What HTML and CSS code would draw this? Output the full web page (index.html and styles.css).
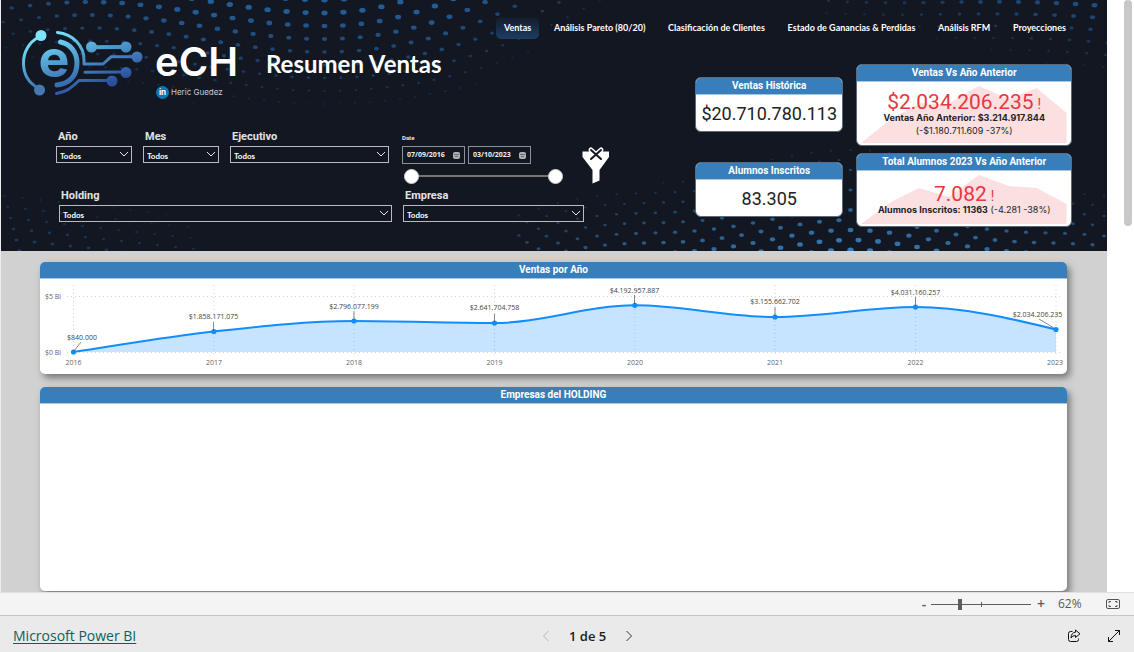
FILE: index.html
```html
<!DOCTYPE html>
<html lang="es">
<head>
<meta charset="utf-8">
<meta name="viewport" content="width=device-width, initial-scale=1">
<title>Resumen Ventas</title>
<link rel="stylesheet" href="styles.css">
</head>
<body>
<main class="viewer">
  <div class="report">
    <header class="hero">
      <svg class="hero-dots" viewBox="0 0 1107 251" preserveAspectRatio="xMidYMid slice" aria-hidden="true"></svg>

      <div class="brand">
        <svg class="brand-mark" viewBox="20 28 124 70" aria-hidden="true">
          <defs>
            <linearGradient id="mark" gradientUnits="userSpaceOnUse" x1="60" y1="32" x2="80" y2="94">
              <stop offset="0" stop-color="#76e2fb"/>
              <stop offset="0.5" stop-color="#4b93c8"/>
              <stop offset="1" stop-color="#2b4c9c"/>
            </linearGradient>
          </defs>
          <g fill="none" stroke="url(#mark)" stroke-width="3" stroke-linecap="round">
            <path d="M39 37C29 42 23.500 52 23.500 63S29 83 38 88"/>
            <path d="M57.500 32.500C73 34 84 46 84 60V64H103L111 56.800H134" stroke-linejoin="round"/>
            <path d="M60.500 42C71 44 77 53 77 63C77 76 69 84 57 85" stroke-width="5"/>
            <path d="M56.500 93.500C66 92 70 89 79 80.500H110" stroke-linejoin="round"/>
            <path d="M92 47.200L125 47" stroke-width="4"/>
            <path d="M85 72.200L124 72"/>
          </g>
          <g fill="url(#mark)">
            <circle cx="41" cy="35.500" r="5.500" fill="#7ce4fc"/>
            <circle cx="39.500" cy="90" r="5.500" fill="#4678b4"/>
            <circle cx="91.500" cy="47" r="5.500"/>
            <circle cx="126" cy="47" r="5.500"/>
            <circle cx="137" cy="57" r="5.500"/>
            <circle cx="126" cy="72.500" r="5.500"/>
            <circle cx="112" cy="81" r="5.500"/>
          </g>
          <text class="mark-letter" x="54" y="77" text-anchor="middle" fill="url(#mark)">e</text>
        </svg>
        <div class="brand-name">
          <span class="brand-title">eCH</span>
          <span class="brand-author"><span class="linkedin">in</span>Heric Guedez</span>
        </div>
        <h1>Resumen Ventas</h1>
      </div>

      <nav class="tabs">
        <a class="tab tab-active" href="#">Ventas</a>
        <a class="tab" href="#">Análisis Pareto (80/20)</a>
        <a class="tab" href="#">Clasificación de Clientes</a>
        <a class="tab" href="#">Estado de Ganancias &amp; Perdidas</a>
        <a class="tab" href="#">Análisis RFM</a>
        <a class="tab" href="#">Proyecciones</a>
      </nav>

      <form class="filters">
        <div class="filter-row">
          <div class="field field-small">
            <label for="anio">Año</label>
            <div class="picker"><select id="anio"><option>Todos</option></select><svg class="chevron" viewBox="0 0 10 6"><path d="M1 1L5 5L9 1"/></svg></div>
          </div>
          <div class="field field-small">
            <label for="mes">Mes</label>
            <div class="picker"><select id="mes"><option>Todos</option></select><svg class="chevron" viewBox="0 0 10 6"><path d="M1 1L5 5L9 1"/></svg></div>
          </div>
          <div class="field field-medium">
            <label for="ejecutivo">Ejecutivo</label>
            <div class="picker"><select id="ejecutivo"><option>Todos</option></select><svg class="chevron" viewBox="0 0 10 6"><path d="M1 1L5 5L9 1"/></svg></div>
          </div>
          <div class="field field-date">
            <label class="date-label" for="desde">Date</label>
            <div class="dates">
              <div class="date"><input id="desde" type="text" value="07/09/2016"><svg viewBox="0 0 7 7"><rect x="0.500" y="0.500" width="6" height="6" rx="1"/><path d="M1 2.500H6M2 4.500H5"/></svg></div>
              <div class="date"><input type="text" value="03/10/2023" aria-label="Fecha final"><svg viewBox="0 0 7 7"><rect x="0.500" y="0.500" width="6" height="6" rx="1"/><path d="M1 2.500H6M2 4.500H5"/></svg></div>
            </div>
            <div class="span-slider">
              <input type="range" value="0" aria-label="Inicio del rango">
              <input type="range" value="100" aria-label="Fin del rango">
            </div>
          </div>
          <button class="clear" type="button" aria-label="Borrar filtros">
            <svg viewBox="582 146 28 38">
              <path class="funnel" d="M582.500 151.500H609V157L599.500 170V180.500L592.500 183.500V170L582.500 157Z"/>
              <path class="cross-edge" d="M591 150L601 159M601 150L591 159"/>
              <path class="cross" d="M591 150L601 159M601 150L591 159"/>
            </svg>
          </button>
        </div>
        <div class="filter-row filter-row-wide">
          <div class="field field-holding">
            <label for="holding">Holding</label>
            <div class="picker"><select id="holding"><option>Todos</option></select><svg class="chevron" viewBox="0 0 10 6"><path d="M1 1L5 5L9 1"/></svg></div>
          </div>
          <div class="field field-empresa">
            <label for="empresa">Empresa</label>
            <div class="picker"><select id="empresa"><option>Todos</option></select><svg class="chevron" viewBox="0 0 10 6"><path d="M1 1L5 5L9 1"/></svg></div>
          </div>
        </div>
      </form>

      <section class="kpis">
        <div class="kpi-totals">
          <article class="card">
            <h2>Ventas Histórica</h2>
            <p class="total">$20.710.780.113</p>
          </article>
          <article class="card">
            <h2>Alumnos Inscritos</h2>
            <p class="total">83.305</p>
          </article>
        </div>
        <div class="kpi-trends">
          <article class="card">
            <h2>Ventas Vs Año Anterior</h2>
            <div class="trend trend-sales">
              <svg class="spark" viewBox="0 0 206 58" preserveAspectRatio="none" aria-hidden="true"><path d="M0 58L30 34L60 18L85 20L118 1L148 14L176 3L206 28V58Z"/></svg>
              <p class="value">$2.034.206.235<span class="alert">!</span></p>
              <p class="goal"><b>Ventas Año Anterior: $3.214.917.844</b></p>
              <p class="goal">(-$1.180.711.609 -37%)</p>
            </div>
          </article>
          <article class="card">
            <h2>Total Alumnos 2023 Vs Año Anterior</h2>
            <div class="trend trend-students">
              <svg class="spark" viewBox="0 0 206 50" preserveAspectRatio="none" aria-hidden="true"><path d="M0 50L30 28L58 14L88 23L118 1L148 12L176 14L206 30V50Z"/></svg>
              <p class="value">7.082<span class="alert">!</span></p>
              <p class="goal"><b>Alumnos Inscritos: 11363</b> (-4.281 -38%)</p>
            </div>
          </article>
        </div>
      </section>
    </header>

    <div class="panels">
      <section class="panel">
        <h2>Ventas por Año</h2>
        <svg class="chart" viewBox="0 0 1027 95" role="img" aria-label="Ventas por Año">
          <path class="grid" d="M27 17.500H1021M27 73.500H1021M33.500 6V77M173.800 6V77M314 6V77M454.500 6V77M594.800 6V77M735 6V77M875.500 6V77M1016 6V77"/>
          <path class="area" d="M33.500 73C80 66 127 57.700 173.800 52.500C220.600 47.300 267 42 314 42C361 42 408 44 454.500 44C501 44 548 26.300 594.800 26.300C641.500 26.300 688 38 735 38C782 38 829 28 875.500 28C922 28 969 39 1016 50.500V73H33.500Z"/>
          <path class="line" d="M33.500 73C80 66 127 57.700 173.800 52.500C220.600 47.300 267 42 314 42C361 42 408 44 454.500 44C501 44 548 26.300 594.800 26.300C641.500 26.300 688 38 735 38C782 38 829 28 875.500 28C922 28 969 39 1016 50.500"/>
          <g class="points">
            <circle cx="33.500" cy="73" r="2.600"/><circle cx="173.800" cy="52.500" r="2.600"/><circle cx="314" cy="42" r="2.600"/><circle cx="454.500" cy="44" r="2.600"/><circle cx="594.800" cy="26.300" r="2.600"/><circle cx="735" cy="38" r="2.600"/><circle cx="875.500" cy="28" r="2.600"/><circle cx="1016" cy="50.500" r="2.600"/>
          </g>
          <path class="leaders" d="M34 72L41 63M173.500 52V43M314 41V32M454.500 43V35M594.500 25V16M735 37V28M875.500 27V18M1014 49L999 40"/>
          <g class="labels">
            <text x="42" y="61">$840.000</text><text x="173.500" y="40">$1.858.171.075</text><text x="314" y="30">$2.796.077.199</text><text x="454.500" y="31">$2.641.704.758</text><text x="594.500" y="14">$4.192.957.887</text><text x="735" y="25">$3.155.662.702</text><text x="875.500" y="16">$4.031.160.257</text><text x="997.500" y="38">$2.034.206.235</text>
          </g>
          <g class="ticks">
            <text x="13" y="20">$5 Bi</text><text x="13" y="76">$0 Bi</text>
            <text x="33.500" y="86">2016</text><text x="174" y="86">2017</text><text x="314" y="86">2018</text><text x="454.500" y="86">2019</text><text x="595" y="86">2020</text><text x="735" y="86">2021</text><text x="875.500" y="86">2022</text><text x="1015" y="86">2023</text>
          </g>
        </svg>
      </section>
      <section class="panel panel-fill">
        <h2>Empresas del HOLDING</h2>
      </section>
    </div>
  </div>
  <div class="scroll-track"><div class="scroll-thumb"></div></div>
</main>

<div class="zoom-bar">
  <button class="zoom-step" type="button" aria-label="Alejar">-</button>
  <input class="zoom-range" type="range" min="0" max="100" value="28" aria-label="Zoom">
  <button class="zoom-step" type="button" aria-label="Acercar">+</button>
  <span class="zoom-value">62%</span>
  <button class="fit" type="button" aria-label="Ajustar a la página">
    <svg viewBox="0 0 14 10"><rect x="0.500" y="0.500" width="13" height="9" rx="1.500"/><path d="M3 4V2.500H5M9 2.500H11V4M11 6V7.500H9M5 7.500H3V6"/></svg>
  </button>
</div>

<footer class="footer">
  <a class="product" href="#">Microsoft Power BI</a>
  <div class="pager">
    <button class="page-prev" type="button" aria-label="Página anterior" disabled><svg viewBox="0 0 8 12"><path d="M6.500 1L1.500 6L6.500 11"/></svg></button>
    <span>1 de 5</span>
    <button type="button" aria-label="Página siguiente"><svg viewBox="0 0 8 12"><path d="M1.500 1L6.500 6L1.500 11"/></svg></button>
  </div>
  <div class="actions">
    <button type="button" aria-label="Compartir"><svg viewBox="0 0 14 14"><path d="M5.500 2.500H3.500Q1.500 2.500 1.500 4.500V10.500Q1.500 12.500 3.500 12.500H9.500Q11.500 12.500 11.500 10.500V9.500"/><path d="M8.500 1L13 4.800L8.500 8.500V6.500Q5.500 6.300 4 9Q4.300 3.500 8.500 3.200Z" stroke-linejoin="round"/></svg></button>
    <button type="button" aria-label="Pantalla completa"><svg viewBox="0 0 14 14"><path d="M8 1.500H12.500V6M12.500 1.500L1.500 12.500M1.500 8V12.500H6"/></svg></button>
  </div>
</footer>
<script src="dots.js"></script>
</body>
</html>
```

FILE: styles.css
```css
* { box-sizing: border-box; }

body {
  margin: 0;
  height: 100vh;
  display: flex;
  flex-direction: column;
  overflow: hidden;
  font-family: "Open Sans", "Noto Sans", sans-serif;
  background: #fff;
}

h1, h2, p { margin: 0; }
button { padding: 0; border: 0; background: none; font: inherit; color: inherit; }
svg { display: block; }

.viewer { flex: 1; min-height: 0; display: flex; }

.report {
  flex: 1;
  min-width: 0;
  display: flex;
  flex-direction: column;
  border-left: 1px solid #ededed;
  background: #d1d1d1;
}

.scroll-track { width: 27px; padding: 0 2px 0 17px; }
.scroll-thumb { height: 226px; border-radius: 4px; background: #c8c8c8; }

/* Header */
.hero {
  position: relative;
  display: grid;
  grid-template-columns: 495fr 199fr 412fr;
  grid-template-rows: 64px 66px auto;
  padding-bottom: 24px;
  background: #131722;
  color: #fff;
}
.hero > * { position: relative; }
.hero > .hero-dots { position: absolute; width: 100%; height: 100%; }

.brand {
  grid-area: 1 / 1 / 3 / 2;
  display: flex;
  align-items: flex-start;
  padding: 28px 0 0 19px;
}
.brand-mark { width: 124px; height: 70px; }
.mark-letter { font: 700 52px Inter, sans-serif; }
.brand-name { display: flex; flex-direction: column; padding: 12px 0 0 11px; }
.brand-title { font: 600 40px/44px Inter, sans-serif; }
.brand-author {
  display: flex;
  align-items: center;
  gap: 2px;
  padding-left: 1px;
  font: 400 8px/16px Inter, sans-serif;
  color: #c9ccd2;
}
.linkedin {
  width: 13px;
  height: 13px;
  border-radius: 50%;
  background: #0a78b8;
  color: #fff;
  font-weight: 700;
  line-height: 12px;
  text-align: center;
}
.brand h1 {
  padding: 20px 0 0 28px;
  font: 700 24px/32px Lato, sans-serif;
  white-space: nowrap;
}

.tabs {
  grid-area: 1 / 2 / 2 / 4;
  display: flex;
  justify-content: space-between;
  align-items: flex-start;
  padding: 17px 33px 0 0;
}
.tab {
  padding: 0 8px;
  border-radius: 5px;
  font: 700 9px/22px Lato, sans-serif;
  color: #fff;
  text-decoration: none;
  white-space: nowrap;
}
.tab-active { background: linear-gradient(#141b28, #1d3d63); }

/* Filters */
.filters { grid-area: 3 / 1 / 4 / 3; padding-left: 55px; }
.filter-row { display: flex; height: 59px; }
.filter-row-wide { height: auto; padding-left: 3px; gap: 11px; }
.field label {
  display: block;
  padding-left: 2px;
  font: 700 11px/13px Roboto, sans-serif;
  color: #e3e3e3;
}
.field-small { width: 76px; margin-right: 11px; }
.field-medium { width: 159px; margin-right: 13px; }
.field-date { width: 163px; }
.field-holding { width: 333px; }
.field-empresa { width: 181px; }
.picker { position: relative; margin-top: 3px; }
.picker select {
  display: block;
  width: 100%;
  height: 17px;
  padding: 2px 3px 0;
  border: 1px solid #b9bbbf;
  border-radius: 0;
  appearance: none;
  background: transparent;
  color: #fff;
  font: 700 8px/14px Lato, sans-serif;
}
.chevron {
  position: absolute;
  right: 3px;
  top: 5px;
  width: 10px;
  height: 6px;
  fill: none;
  stroke: #e8e8e8;
  pointer-events: none;
}
.field .date-label { padding: 2px 0 0; font-size: 6px; line-height: 11px; }
.dates { display: flex; gap: 3px; margin-top: 3px; }
.date {
  display: flex;
  align-items: center;
  width: 63px;
  height: 18px;
  padding: 0 4px;
  border: 1px solid #8d9095;
}
.date input {
  flex: 1;
  min-width: 0;
  height: 14px;
  padding: 0;
  border: 0;
  background: none;
  color: #f0f0f0;
  font: 700 7px/14px "Open Sans", sans-serif;
}
.date svg { width: 7px; height: 7px; fill: #aeb0b4; stroke: #aeb0b4; stroke-width: 1; }
.date path { stroke: #6a6d74; }
.span-slider {
  position: relative;
  width: 159px;
  height: 16px;
  margin-top: 4px;
  margin-left: 2px;
  background: linear-gradient(#77756f, #77756f) center / 144px 2px no-repeat;
}
.span-slider input {
  position: absolute;
  inset: 0;
  width: 100%;
  height: 100%;
  margin: 0;
  appearance: none;
  background: none;
  pointer-events: none;
}
.span-slider input::-webkit-slider-thumb {
  appearance: none;
  width: 15px;
  height: 15px;
  border: 1px solid #d0d0d0;
  border-radius: 50%;
  background: #fff;
  pointer-events: auto;
}
.clear { width: 28px; height: 38px; margin: 16px 0 0 17px; }
.funnel { fill: #fff; }
.cross, .cross-edge { fill: none; stroke-linecap: round; }
.cross-edge { stroke: #fff; stroke-width: 5; }
.cross { stroke: #131722; stroke-width: 2; }

/* Indicator cards */
.kpis {
  grid-area: 2 / 3 / 4 / 4;
  display: flex;
  align-items: flex-start;
  gap: 13px;
  padding-right: 35px;
}
.kpi-totals { flex: 148; display: flex; flex-direction: column; gap: 30px; padding-top: 13px; }
.kpi-trends { flex: 215; display: flex; flex-direction: column; gap: 7px; }
.card {
  overflow: hidden;
  border: 1px solid #5b6b7c;
  border-radius: 6px;
  background: #fff;
  color: #222;
}
.card h2, .panel h2 {
  background: #377eba;
  border-bottom: 1px solid #a9c6df;
  color: #fff;
  text-align: center;
  font: 700 10px/16px Roboto, sans-serif;
}
.total { padding-top: 2px; text-align: center; font: 400 18px/34px Roboto, sans-serif; }
.trend { position: relative; text-align: center; }
.trend-sales { height: 63px; padding-top: 9px; }
.trend-students { height: 55px; padding-top: 12px; }
.spark {
  position: absolute;
  left: 4px;
  right: 4px;
  bottom: 2px;
  width: calc(100% - 8px);
  height: calc(100% - 5px);
  fill: #fcdfe0;
}
.trend p { position: relative; white-space: nowrap; }
.value { font: 400 21px/22px Roboto, sans-serif; color: #e8373d; }
.alert { padding-left: 4px; font-size: 14px; line-height: 14px; }
.goal { font: 400 9px/13px Inter, sans-serif; color: #222; }
.trend-sales .value, .trend-students .value { height: 20px; }

/* Panels */
.panels {
  flex: 1;
  min-height: 0;
  display: flex;
  flex-direction: column;
  gap: 13px;
  padding: 11px 40px 1px 39px;
}
.panel {
  overflow: hidden;
  border-radius: 5px;
  background: #fff;
  box-shadow: 3px 4px 7px #777;
}
.panel-fill { flex: 1; }
.chart { width: 100%; height: auto; font: 400 7px "Open Sans", sans-serif; }
.chart text { text-anchor: middle; }
.grid { fill: none; stroke: #d3d3d3; stroke-dasharray: 1 3; }
.area { fill: #118dff; fill-opacity: 0.24; }
.line { fill: none; stroke: #118dff; stroke-width: 2; }
.points { fill: #118dff; }
.leaders { fill: none; stroke: #555; stroke-width: 0.7; }
.labels { fill: #444; }
.ticks { fill: #666; }

/* Zoom bar */
.zoom-bar {
  display: flex;
  align-items: center;
  justify-content: flex-end;
  height: 24px;
  padding-right: 14px;
  border-top: 1px solid #e0e0e0;
  border-bottom: 1px solid #c6c6c6;
  background: #f4f4f4;
  color: #5a5a58;
}
.zoom-step { width: 14px; font-size: 14px; line-height: 18px; font-weight: 600; }
.zoom-range {
  width: 100px;
  height: 12px;
  margin: 0 3px 0 0;
  appearance: none;
  background:
    linear-gradient(#605e5c, #605e5c) center / 1px 5px no-repeat,
    linear-gradient(#605e5c, #605e5c) center / 100% 1px no-repeat;
}
.zoom-range::-webkit-slider-thumb { appearance: none; width: 4px; height: 11px; background: #605e5c; }
.zoom-value { width: 44px; padding-left: 10px; font-size: 12px; line-height: 18px; }
.fit { width: 14px; margin-left: 14px; }
.fit svg { width: 14px; height: 10px; fill: none; stroke: #555; }

/* Footer */
.footer {
  display: flex;
  align-items: center;
  justify-content: space-between;
  height: 36px;
  padding: 3px 0 0 13px;
  background: #eaeaea;
  color: #1b1b1b;
}
.product { font-size: 14px; line-height: 20px; color: #0b6158; text-underline-offset: 2px; }
.pager { display: flex; align-items: center; gap: 19px; font-size: 13px; line-height: 20px; font-weight: 600; }
.pager svg { width: 8px; height: 12px; fill: none; stroke: #333; }
.pager .page-prev svg { stroke: #b8b8b8; }
.actions { display: flex; padding-left: 15px; }
.actions button { width: 40px; display: flex; justify-content: center; }
.actions svg { width: 14px; height: 14px; fill: none; stroke: #111; }
```

FILE: dots.js
```js
// Halftone waves behind the header.
const layer = document.querySelector(".hero-dots");

function dot(x, y, strength, color) {
  if (strength <= 0.05 || y < -3 || y > 254) return;
  const e = document.createElementNS("http://www.w3.org/2000/svg", "ellipse");
  const s = Math.min(1, strength);
  e.setAttribute("cx", x.toFixed(1));
  e.setAttribute("cy", y.toFixed(1));
  e.setAttribute("rx", (1 + 2.2 * s).toFixed(2));
  e.setAttribute("ry", (0.8 + 1.7 * s).toFixed(2));
  e.setAttribute("fill", color);
  e.setAttribute("opacity", (0.15 + 0.8 * s).toFixed(2));
  layer.appendChild(e);
}

// Upper left wave
for (let k = 0; k < 22; k++) {
  const step = 19.5 - 0.55 * Math.min(k, 10);
  for (let i = -20; i < 20; i++) {
    const u = i * step;
    const rise = u > 0 ? (u * u) / (430 + 90 * k) : 12 * (1 - Math.cos((2 * Math.PI * u) / 470));
    const x = 324 + u;
    const y = 13 * k - rise;
    const side = x > 440 ? (x - 440) / 170 : x < 200 ? (200 - x) / 380 : 0;
    dot(x, y, 1.1 - y / 100 - side, "#24619f");
  }
}

// Upper right wave
for (let k = -2; k < 7; k++) {
  for (let i = 0; i < 16; i++) {
    const x = 828 + i * 19 - k * 2;
    const y = 12 * k + i - 4 + 5 * Math.cos(i / 4);
    dot(x, y, 0.95 - y / 85 - (1107 - x) / 420, "#205a95");
  }
}

// Lower right wave
for (let k = 0; k < 14; k++) {
  for (let i = -17; i < 15; i++) {
    const x = 850 + i * 19.5 + (k % 2) * 8;
    const u = x - 850;
    const y = 136 + 10 * k + (u * u) / 2600 - 6 * Math.cos(u / 45);
    dot(x, y, (y - 135) / 115 - Math.abs(u) / 560, "#3784c6");
  }
}

// Lower left corner
for (let k = 0; k < 6; k++) {
  for (let i = 0; i < 11; i++) {
    const x = 4 + i * 18 + k * 3;
    const y = 196 + 11 * k + i * 2;
    dot(x, y, 0.35 - x / 650 + (y - 220) / 150, "#205a95");
  }
}
```
